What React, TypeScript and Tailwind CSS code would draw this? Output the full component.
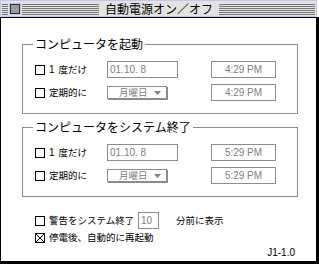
import type { ReactNode } from 'react'

const JP = "font-['Noto_Sans_CJK_JP',sans-serif]"
const LATIN = "font-['Liberation_Sans','Noto_Sans_CJK_JP',sans-serif]"

function Stripes({ className = '' }: { className?: string }) {
  return (
    <div className={`flex h-full flex-col gap-px pt-[3px] ${className}`}>
      {Array.from({ length: 6 }).map((_, i) => (
        <div key={i} className="h-px bg-[#777777]" />
      ))}
    </div>
  )
}

function TitleBar() {
  return (
    <div className="flex h-[17px] w-[317px] border border-[#c4c4ec] bg-[#e2e2e2]">
      <Stripes className="ml-px w-[6px]" />
      {/* close box */}
      <div className="ml-px mt-[2px] h-[12px] w-[12px] border border-[#c4c4ec]">
        <div className="h-full w-full border border-[#2a2a40] bg-[#9c9c9c]" />
      </div>
      <Stripes className="ml-px w-[77px]" />
      <div className={`flex w-[120px] items-center justify-center text-[12px] leading-none text-black ${JP}`}>
        自動電源オン／オフ
      </div>
      <Stripes className="mr-px flex-1" />
    </div>
  )
}

function Checkbox({ checked = false }: { checked?: boolean }) {
  return (
    <div className="h-[10px] w-[10px] shrink-0 border border-black bg-white">
      {checked && (
        <svg width="8" height="8" viewBox="0 0 8 8" className="block">
          <path d="M0 0L8 8M8 0L0 8" stroke="black" strokeWidth="1" />
        </svg>
      )}
    </div>
  )
}

function Field({ width, children, center = false }: { width: string; children: ReactNode; center?: boolean }) {
  return (
    <div
      className={`flex h-[17px] shrink-0 items-center border border-[#8c8c8c] bg-white text-[10px] text-[#808080] ${LATIN} ${width} ${
        center ? 'justify-center' : 'pl-[2px]'
      }`}
    >
      {children}
    </div>
  )
}

function Popup() {
  return (
    <div
      className={`flex h-[13px] w-[60px] items-center border border-[#8c8c8c] bg-white text-[9.5px] leading-none text-[#808080] shadow-[1px_1px_0_#8c8c8c] ${JP}`}
    >
      <span className="ml-[11px]">月曜日</span>
      <svg width="7" height="4" viewBox="0 0 7 4" className="ml-[6px]">
        <path d="M0 0H7L3.5 4Z" fill="#808080" />
      </svg>
    </div>
  )
}

function Label({ children, className = '' }: { children: ReactNode; className?: string }) {
  return (
    <span className={`ml-[4px] whitespace-nowrap text-[9.5px] leading-none text-black ${JP} ${className}`}>
      {children}
    </span>
  )
}

function Row({ label, date, time, popup = false }: { label: ReactNode; date?: string; time: string; popup?: boolean }) {
  return (
    <div className="flex h-[17px] items-center">
      <div className="flex w-[72px] items-center">
        <Checkbox />
        <Label>{label}</Label>
      </div>
      {popup ? (
        <div className="w-[71px]">
          <Popup />
        </div>
      ) : (
        <Field width="w-[71px]">{date}</Field>
      )}
      <div className="ml-[33px]">
        <Field width="w-[65px]" center>
          {time}
        </Field>
      </div>
    </div>
  )
}

function Group({ title, time }: { title: string; time: string }) {
  return (
    <div className="w-[276px]">
      <div className="flex h-[12px]">
        <div className="mt-[6px] h-[6px] w-[11px] border-l border-t border-[#8c8c8c]" />
        <span className={`px-[2px] text-[12px] leading-[12px] text-black ${JP}`}>{title}</span>
        <div className="mt-[6px] h-[6px] flex-1 border-r border-t border-[#8c8c8c]" />
      </div>
      <div className="border-b border-l border-r border-[#8c8c8c] pb-[12px] pl-[12px] pt-[11px]">
        <Row
          label={
            <>
              <span className={`mr-[4px] text-[10px] ${LATIN}`}>1</span>度だけ
            </>
          }
          date="01.10. 8"
          time={time}
        />
        <div className="mt-[6px]">
          <Row label="定期的に" popup time={time} />
        </div>
      </div>
    </div>
  )
}

export default function App() {
  return (
    <div className="h-[264px] w-[319px] bg-white">
      <TitleBar />
      <div className="h-[247px] w-[319px] bg-black pb-[3px] pl-px pr-[3px] pt-px">
        <div className="flex h-full w-full flex-col bg-white pl-[21px] pt-[20px]">
          <Group title="コンピュータを起動" time="4:29 PM" />
          <div className="mt-[7px]">
            <Group title="コンピュータをシステム終了" time="5:29 PM" />
          </div>
          <div className="ml-[13px] mt-[15px] flex h-[17px] items-center">
            <Checkbox />
            <Label className="w-[89px]">警告をシステム終了</Label>
            <Field width="w-[21px]">10</Field>
            <Label className="ml-[17px]">分前に表示</Label>
          </div>
          <div className="ml-[13px] mt-[3px] flex h-[12px] items-center">
            <Checkbox checked />
            <Label>停電後、自動的に再起動</Label>
          </div>
          <div className={`mt-[3px] w-[273px] text-right text-[10px] leading-[12px] text-black ${LATIN}`}>J1-1.0</div>
        </div>
      </div>
    </div>
  )
}
